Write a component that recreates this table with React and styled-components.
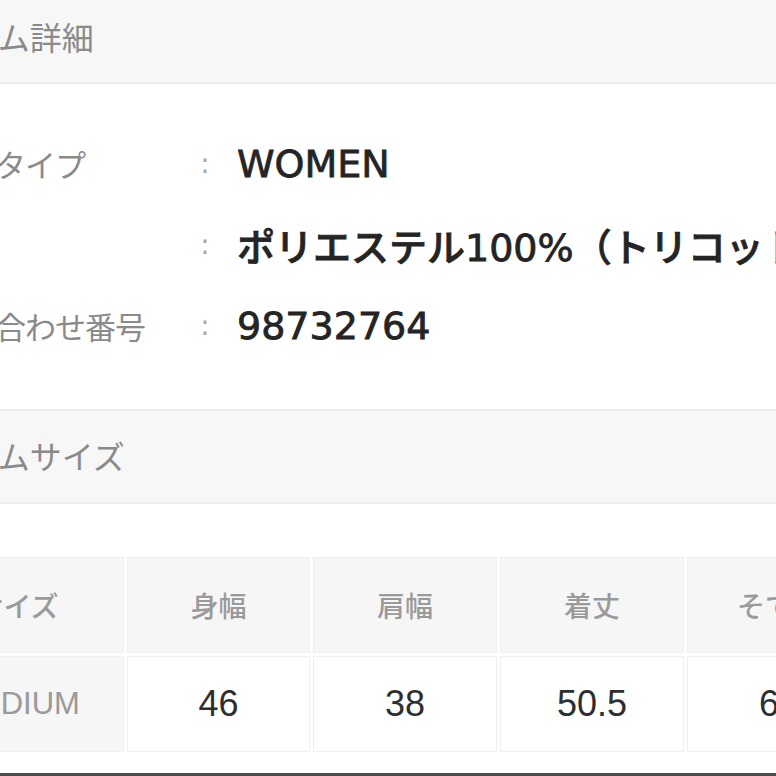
import styled, { createGlobalStyle } from "styled-components";

const GlobalStyle = createGlobalStyle`
  html, body {
    margin: 0;
    padding: 0;
    background: #fff;
    overflow: hidden;
  }
  body {
    font-family: "Noto Sans CJK JP", "Noto Sans", sans-serif;
    color: #2b2b2b;
  }
`;

const details = [
  { label: "性別　タイプ", value: "WOMEN" },
  { label: "素材", value: "ポリエステル100%（トリコット）" },
  { label: "お問い合わせ番号", value: "98732764" },
];

const sizeHead = ["サイズ", "身幅", "肩幅", "着丈", "そで丈"];
const sizeRow = ["MEDIUM", "46", "38", "50.5", "61"];
const colWidths = [214, 183, 184, 184, 184];

const App = () => {
  return (
    <>
      <GlobalStyle />
      <Page>
        <SectionHead $first>
          <HeadTitle>アイテム詳細</HeadTitle>
        </SectionHead>

        <DetailList>
          {details.map((d) => (
            <DetailRow key={d.label}>
              <Label>{d.label}</Label>
              <Colon>:</Colon>
              <Value>{d.value}</Value>
            </DetailRow>
          ))}
        </DetailList>

        <SectionHead>
          <HeadTitle>アイテムサイズ</HeadTitle>
        </SectionHead>

        <SizeTable>
          <colgroup>
            {colWidths.map((w, i) => (
              <col key={i} style={{ width: w }} />
            ))}
          </colgroup>
          <thead>
            <tr>
              {sizeHead.map((h) => (
                <HeadCell key={h}>{h}</HeadCell>
              ))}
            </tr>
          </thead>
          <tbody>
            <tr>
              {sizeRow.map((v, i) => (
                <DataCell key={i} $name={i === 0}>
                  {v}
                </DataCell>
              ))}
            </tr>
          </tbody>
        </SizeTable>
      </Page>
      <BottomEdge />
    </>
  );
};

const Page = styled.div`
  width: 1020px;
  margin-left: -120px;
  height: 773px;
  overflow: hidden;
`;

const SectionHead = styled.div`
  display: flex;
  align-items: center;
  height: ${(p) => (p.$first ? "90px" : "95px")};
  padding-left: 25px;
  box-sizing: border-box;
  background: #f7f7f7;
  border-bottom: 2px solid #ececec;
  border-top: ${(p) => (p.$first ? "none" : "2px solid #ededed")};
  margin-top: ${(p) => (p.$first ? "-6px" : "43px")};
`;

const HeadTitle = styled.h2`
  margin: 0 0 4px;
  font-size: 32px;
  font-weight: 400;
  color: #8a8a8a;
  white-space: nowrap;
`;

const DetailList = styled.div`
  display: flex;
  flex-direction: column;
  padding: 39px 0 0 25px;
`;

const DetailRow = styled.div`
  display: grid;
  grid-template-columns: 285px 30px 1fr;
  align-items: center;
  height: 81px;
`;

const Label = styled.div`
  font-size: 31px;
  font-weight: 400;
  color: #8a8a8a;
  letter-spacing: -1px;
  white-space: nowrap;
`;

const Colon = styled.div`
  text-align: center;
  font-family: "DejaVu Sans", sans-serif;
  font-size: 28px;
  color: #a8a8a8;
`;

const Value = styled.div`
  padding-left: 17px;
  font-family: "DejaVu Sans", "Noto Sans CJK JP", sans-serif;
  font-size: 38px;
  font-weight: 500;
  color: #242424;
  white-space: nowrap;
  -webkit-text-stroke: 0.8px #242424;
`;

const SizeTable = styled.table`
  margin: 50px 0 0 27px;
  table-layout: fixed;
  border-collapse: separate;
  border-spacing: 3px;
  background: #fff;
`;

const HeadCell = styled.th`
  height: 96px;
  padding: 0;
  box-sizing: border-box;
  background: #f6f6f6;
  border: 1px solid #efefef;
  font-size: 28px;
  font-weight: 500;
  color: #9a9a9a;
  text-align: center;
`;

const DataCell = styled.td`
  height: 96px;
  padding: 0;
  box-sizing: border-box;
  background: ${(p) => (p.$name ? "#f6f6f6" : "#fff")};
  border: 1px solid #efefef;
  font-family: "Liberation Sans", Arial, sans-serif;
  font-size: ${(p) => (p.$name ? "31px" : "36px")};
  color: ${(p) => (p.$name ? "#9a9a9a" : "#2e2e2e")};
  text-align: center;
`;

const BottomEdge = styled.div`
  height: 3px;
  background: #4d4d4d;
`;

export default App;
